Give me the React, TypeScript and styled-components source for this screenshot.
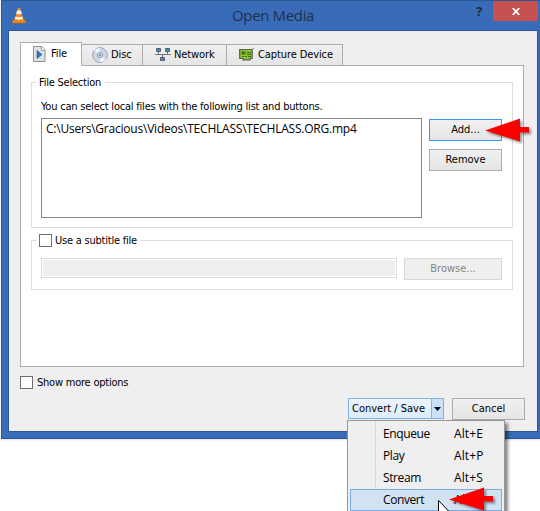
import React from 'react';
import styled, { createGlobalStyle } from 'styled-components';

const GlobalStyle = createGlobalStyle`
  * { box-sizing: border-box; }
  html, body { margin: 0; width: 540px; height: 511px; overflow: hidden; background: #fff; }
`;

const Screen = styled.div`
  position: relative;
  width: 540px;
  height: 511px;
  padding-left: 1px;
  overflow: hidden;
  background: #fff;
  color: #000;
  font: 11px/16px "DejaVu Sans Condensed", "DejaVu Sans", sans-serif;
  font-stretch: condensed;
  white-space: nowrap;
`;

const Window = styled.div`
  width: 539px;
  height: 439px;
  display: flex;
  flex-direction: column;
  padding: 0 2px 7px 6px;
  background: #396cb8;
  border: solid #2b5797;
  border-width: 1px 0 1px 1px;
  box-shadow: 0 1px 2px #0002;
`;

const TitleBar = styled.header`
  height: 29px;
  display: flex;
  align-items: flex-start;
  flex: none;
`;

const ConeIcon = styled.svg`
  width: 16px;
  height: 18px;
  margin: 5px 0 0 3px;
`;

const Title = styled.h1`
  flex: 1;
  margin: 4px 0 0 205px;
  color: #20304d;
  font: 15px/20px "Open Sans", sans-serif;
  letter-spacing: -0.35px;
`;

const HelpButton = styled.button`
  width: 24px;
  height: 20px;
  margin-right: 2px;
  padding: 0;
  border: 0;
  background: none;
  color: #252b35;
  font: bold 13px/20px "Noto Sans", sans-serif;
`;

const CloseButton = styled.button`
  width: 45px;
  height: 20px;
  padding: 0;
  border: 0;
  background: #c75050;
  display: grid;
  place-items: center;
`;

const Client = styled.main`
  flex: 1;
  display: flex;
  flex-direction: column;
  padding: 11px 12px 11px 11px;
  background: #efefef;
  border: 1px solid #2d5796;
`;

const TabStrip = styled.nav`
  display: flex;
  align-items: flex-end;
  height: 24px;
  margin-bottom: -1px;
  z-index: 1;
`;

const Tab = styled.div<{ $w: number; $inset: number; $gap: number; $active?: boolean }>`
  width: ${p => p.$w}px;
  height: ${p => (p.$active ? 24 : 22)}px;
  display: flex;
  align-items: center;
  gap: ${p => p.$gap}px;
  padding-left: ${p => p.$inset}px;
  background: ${p => (p.$active ? '#fff' : 'linear-gradient(#f0f0f0, #e5e5e5)')};
  border: 1px solid #acacac;
  border-bottom-color: ${p => (p.$active ? '#fff' : '#acacac')};
  border-left-width: ${p => (p.$active ? 1 : 0)}px;
  letter-spacing: -0.1px;
  svg { flex: none; }
`;

const Panel = styled.section`
  width: 504px;
  height: 302px;
  flex: none;
  padding: 16px 10px;
  background: #fff;
  border: 1px solid #acacac;
`;

const Group = styled.div<{ $h: number; $gap?: number }>`
  height: ${p => p.$h}px;
  margin-bottom: ${p => p.$gap ?? 0}px;
  border: 1px solid #dcdcdc;
  padding-left: 9px;
`;

const Legend = styled.div`
  width: fit-content;
  height: 15px;
  margin: -8px 0 0 -5px;
  padding: 0 4px 0 3px;
  display: flex;
  align-items: center;
  gap: 3px;
  background: #fff;
`;

const Label = styled.span`
  padding-top: 1px;
  letter-spacing: -0.22px;
`;

const Hint = styled.p`
  height: 16px;
  margin: 9px 0 3px;
  letter-spacing: -0.21px;
`;

const Row = styled.div<{ $top?: number }>`
  display: flex;
  align-items: flex-start;
  gap: 7px;
  margin-top: ${p => p.$top ?? 0}px;
`;

const Stack = styled.div`
  display: grid;
  gap: 8px;
  padding-top: 1px;
`;

const FileList = styled.div`
  width: 381px;
  height: 100px;
  padding: 2px 4px;
  border: 1px solid #828790;
  font: 12px/16px "Open Sans", sans-serif;
  letter-spacing: -0.22px;
`;

const Field = styled.div`
  width: 356px;
  height: 20px;
  border: 1px solid #dcdcdc;
  background: #efefef;
  box-shadow: inset 0 0 0 1px #fff;
`;

const Button = styled.button<{ $w: number; $focus?: boolean }>`
  width: ${p => p.$w}px;
  height: 22px;
  padding: 0;
  border: 1px solid ${p => (p.$focus ? '#3399ff' : '#acacac')};
  background: linear-gradient(#f0f0f0, #e5e5e5);
  color: #000;
  font: inherit;
  &:disabled { color: #838383; background: #efefef; border-color: #d9d9d9; }
`;

const Check = styled.span`
  width: 13px;
  height: 13px;
  flex: none;
  border: 1px solid #707070;
  background: #fff;
`;

const Options = styled.label`
  height: 15px;
  margin-top: 8px;
  display: flex;
  align-items: center;
  gap: 4px;
`;

const Footer = styled.footer`
  height: 22px;
  margin-top: 8px;
  display: flex;
  justify-content: flex-end;
  gap: 8px;
`;

const SplitButton = styled.div`
  width: 96px;
  height: 21px;
  display: flex;
  border: 1px solid #7eb4ea;
  background: linear-gradient(#ecf4fc, #dcecfc);
  line-height: 20px;
`;

const SplitText = styled.span`
  width: 82px;
  padding-left: 3px;
`;

const SplitArrow = styled.span`
  flex: 1;
  display: grid;
  place-items: center;
  border-left: 1px solid #7eb4ea;
  background: #c9e0f7;
`;

const Menu = styled.div`
  position: absolute;
  left: 347px;
  top: 420px;
  width: 158px;
  height: 110px;
  padding: 2px;
  border: 1px solid #979797;
  background: linear-gradient(90deg, #efefef 27px, #d7d7d7 27px, #d7d7d7 28px, #efefef 28px);
  box-shadow: 3px 3px 3px #0007;
  font: 12px/20px "Open Sans", sans-serif;
`;

const MenuItem = styled.div<{ $on?: boolean }>`
  display: grid;
  grid-template-columns: 71px 1fr;
  height: 22px;
  padding-left: 32px;
  border: 1px solid ${p => (p.$on ? '#78aee5' : 'transparent')};
  background: ${p => (p.$on ? '#d1e2f2' : 'none')};
`;

const Command = styled.span`
  letter-spacing: -0.4px;
`;

const Shortcut = styled.span`
  letter-spacing: 0.1px;
`;

const Pointer = styled.svg<{ $x: number; $y: number }>`
  position: absolute;
  left: ${p => p.$x}px;
  top: ${p => p.$y}px;
  overflow: visible;
  filter: drop-shadow(2px 2px 1px #0006);
`;

const Cursor = styled.svg`
  position: absolute;
  left: 438px;
  top: 500px;
`;

const FileIcon = () => (
  <svg width="14" height="17" viewBox="0 0 14 17">
    <path d="M.5.5h8.500l3 3v12H.5z" fill="#dfe2e6" stroke="#8d9095" />
    <path d="M8.500.5v4h3.500" fill="#fff" stroke="#999" />
    <path d="M4 4.500v8L9 8.500z" fill="#2f78bd" stroke="#205a96" strokeWidth=".6" />
  </svg>
);

const DiscIcon = () => (
  <svg width="16" height="16" viewBox="0 0 16 16">
    <circle cx="8" cy="8" r="7.4" fill="#ccd6e6" stroke="#8b97aa" strokeWidth=".8" />
    <path d="M8 8 2 3.500A7 7 0 0 1 8 1zm0 0 6 4.500A7 7 0 0 1 8 15z" fill="#eef3fa" />
    <circle cx="8" cy="8" r="2.5" fill="#e5e8ee" stroke="#8993a3" />
    <circle cx="8" cy="8" r="1" fill="#67768b" />
  </svg>
);

const NetworkIcon = () => (
  <svg width="16" height="16" viewBox="0 0 16 16">
    <path d="M3.500 5v3M12.500 5v3M0 7.500h16M7.500 8v3" stroke="#777" fill="none" />
    <path d="M1.500 1.500h4v3h-4zM10.500 1.500h4v3h-4zM5.500 10.500h4v3h-4z" fill="#438ac9" stroke="#595f67" />
  </svg>
);

const CardIcon = () => (
  <svg width="16" height="16" viewBox="0 0 16 16">
    <path d="M.7 2.500h12.500v9H11v1.300H4v-1.300H.7z" fill="#8fc52e" stroke="#57614b" strokeWidth="1.2" />
    <path d="M13.500 12V2L15 1" stroke="#777" fill="none" />
    <path d="M2.500 4.500h4v3h-4z" fill="#426d17" />
    <path d="M8 5.500h4M8 7.500h4M3 9.500h2M6 9.500h2M9 9.500h3" stroke="#39641c" />
  </svg>
);

const RedArrow = ({ x, y }: { x: number; y: number }) => (
  <Pointer $x={x} $y={y} width="46" height="26" viewBox="0 0 46 26">
    <path d="M0 13.500 35 1.500v8.500h9v5.500h-9v9z" fill="#fc0000" />
  </Pointer>
);

const commands = [['Enqueue', 'Alt+E'], ['Play', 'Alt+P'], ['Stream', 'Alt+S'], ['Convert', 'Alt+C']];

export default function App() {
  return (
    <Screen>
      <GlobalStyle />
      <Window>
        <TitleBar>
          <ConeIcon viewBox="0 0 16 18">
            <path d="m3 13 10 0 2.200 4H1z" fill="#f18a16" stroke="#c66812" strokeWidth=".6" />
            <path d="M7 2h2L12.500 14q-4.500 2-9 0z" fill="#f28b18" />
            <path d="m6.100 4.500-.9 3.200q2.800 1 5.600 0L9.900 4.500zM4.500 10.500l-.6 2.500q4.100 1.600 8.200 0l-.6-2.500q-3.500 1.400-7 0z" fill="#f4f2ed" />
          </ConeIcon>
          <Title>Open Media</Title>
          <HelpButton>?</HelpButton>
          <CloseButton aria-label="Close">
            <svg width="8" height="7" viewBox="0 0 8 7"><path d="m.7 0 6.600 7M7.300 0 .7 7" stroke="#fff" strokeWidth="1.8" /></svg>
          </CloseButton>
        </TitleBar>
        <Client>
          <TabStrip>
            <Tab $w={62} $inset={12} $gap={4} $active><FileIcon />File</Tab>
            <Tab $w={61} $inset={10} $gap={3}><DiscIcon />Disc</Tab>
            <Tab $w={84} $inset={12} $gap={3}><NetworkIcon />Network</Tab>
            <Tab $w={116} $inset={12} $gap={3}><CardIcon />Capture Device</Tab>
          </TabStrip>
          <Panel>
            <Group $h={146} $gap={12}>
              <Legend><Label>File Selection</Label></Legend>
              <Hint>You can select local files with the following list and buttons.</Hint>
              <Row>
                <FileList>C:\Users\Gracious\Videos\TECHLASS\TECHLASS.ORG.mp4</FileList>
                <Stack>
                  <Button $w={73} $focus>Add...</Button>
                  <Button $w={73}>Remove</Button>
                </Stack>
              </Row>
            </Group>
            <Group $h={50}>
              <Legend><Check /><Label>Use a subtitle file</Label></Legend>
              <Row $top={10}><Field /><Button $w={98} disabled>Browse...</Button></Row>
            </Group>
          </Panel>
          <Options><Check /><Label>Show more options</Label></Options>
          <Footer>
            <SplitButton>
              <SplitText>Convert / Save</SplitText>
              <SplitArrow><svg width="7" height="4" viewBox="0 0 7 4"><path d="M0 0h7L3.500 4z" /></svg></SplitArrow>
            </SplitButton>
            <Button $w={73}>Cancel</Button>
          </Footer>
        </Client>
      </Window>
      <Menu>
        {commands.map(([name, keys]) => (
          <MenuItem key={name} $on={name === 'Convert'}><Command>{name}</Command><Shortcut>{keys}</Shortcut></MenuItem>
        ))}
      </Menu>
      <RedArrow x={485} y={117} />
      <RedArrow x={449} y={486} />
      <Cursor width="12" height="19" viewBox="0 0 12 19"><path d="M.5.5v16l4-4 3 6 2-1-3-5.500h5z" fill="#fff" stroke="#000" /></Cursor>
    </Screen>
  );
}
